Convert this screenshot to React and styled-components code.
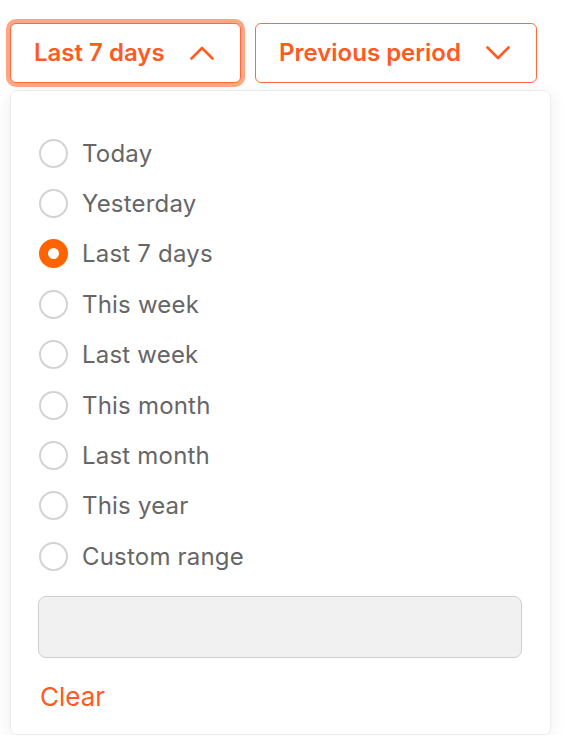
import React from 'react'
import styled, { createGlobalStyle } from 'styled-components'

const options = [
  'Today',
  'Yesterday',
  'Last 7 days',
  'This week',
  'Last week',
  'This month',
  'Last month',
  'This year',
  'Custom range',
]

const Chevron = ({ up }) => (
  <svg width="24" height="14" viewBox="0 0 24 14" fill="none">
    <path
      d={up ? 'M1.5 12.5 L12 2 L22.5 12.5' : 'M1.5 1.5 L12 12 L22.5 1.5'}
      stroke="#ff5a1f"
      strokeWidth="2.6"
      strokeLinecap="round"
      strokeLinejoin="round"
    />
  </svg>
)

const App = () => {
  const selected = 'Last 7 days'
  return (
    <Page>
      <GlobalStyle />
      <Toolbar>
        <DropButton $focused>
          <ButtonText>Last 7 days</ButtonText>
          <Chevron up />
        </DropButton>
        <DropButton>
          <ButtonText>Previous period</ButtonText>
          <Chevron />
        </DropButton>
      </Toolbar>
      <Panel>
        <List>
          {options.map((label) => (
            <Row key={label}>
              <Radio $checked={label === selected} />
              <Label>{label}</Label>
            </Row>
          ))}
        </List>
        <RangeInput />
        <ClearLink>Clear</ClearLink>
      </Panel>
    </Page>
  )
}

const GlobalStyle = createGlobalStyle`
  body {
    margin: 0;
    background: #fff;
    font-family: Inter, 'Noto Sans', sans-serif;
  }
`

const Page = styled.div`
  padding: 23px 0 0 10px;
`

const Toolbar = styled.div`
  display: flex;
  gap: 14px;
  align-items: center;
`

const DropButton = styled.div`
  height: 60px;
  box-sizing: border-box;
  display: flex;
  align-items: center;
  gap: 25px;
  padding: 0 24px 1px 23px;
  border: 1.5px solid #ff6a3d;
  border-radius: 6px;
  background: #fff;
  box-shadow: ${(p) => (p.$focused ? '0 0 0 4px #ffa582' : 'none')};
  width: ${(p) => (p.$focused ? '231px' : '282px')};
`

const ButtonText = styled.span`
  font-size: 24px;
  font-weight: 600;
  color: #ff5a1f;
  white-space: nowrap;
`

const Panel = styled.div`
  margin-top: 7px;
  width: 541px;
  box-sizing: border-box;
  padding: 37px 28px 22px 27px;
  border: 1px solid #ececec;
  border-radius: 7px;
  background: #fff;
  box-shadow: 0 4px 18px rgba(0, 0, 0, 0.07);
`

const List = styled.div`
  display: flex;
  flex-direction: column;
`

const Row = styled.div`
  height: 50.4px;
  display: flex;
  align-items: center;
  gap: 15px;
`

const Radio = styled.span`
  width: 29px;
  height: 29px;
  box-sizing: border-box;
  border-radius: 50%;
  margin-left: 1px;
  flex-shrink: 0;
  border: ${(p) => (p.$checked ? '9px solid #ff6400' : '2px solid #d3d3d3')};
  background: #fff;
`

const Label = styled.span`
  font-size: 24px;
  color: #666;
  letter-spacing: 0.2px;
  margin-left: -1px;
`

const RangeInput = styled.div`
  margin-top: 14px;
  height: 62px;
  box-sizing: border-box;
  border: 1.5px solid #cfcfcf;
  border-radius: 8px;
  background: #f1f1f1;
`

const ClearLink = styled.div`
  margin-top: 24px;
  line-height: 30px;
  font-size: 26px;
  color: #ff5a1f;
  padding-left: 2px;
`

export default App
